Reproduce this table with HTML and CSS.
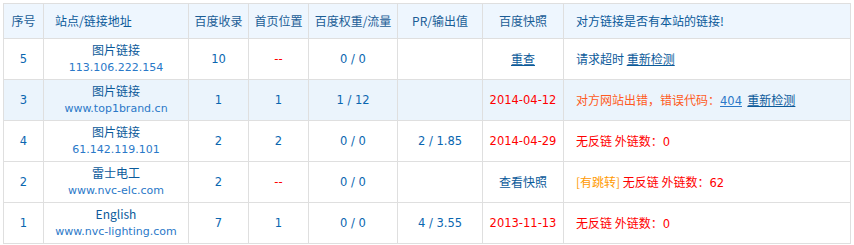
FILE: index.html
```html
<!DOCTYPE html>
<html lang="zh-CN">
<head>
<meta charset="utf-8">
<title>友情链接检测</title>
<link rel="stylesheet" href="styles.css">
</head>
<body>
<div class="wrap">
<table class="links">
  <colgroup>
    <col class="c1"><col class="c2"><col class="c3"><col class="c4"><col class="c5"><col class="c6"><col class="c7"><col class="c8">
  </colgroup>
  <thead>
    <tr>
      <th>序号</th>
      <th class="left">站点/链接地址</th>
      <th>百度收录</th>
      <th>首页位置</th>
      <th>百度权重/流量</th>
      <th>PR/输出值</th>
      <th>百度快照</th>
      <th class="left">对方链接是否有本站的链接!</th>
    </tr>
  </thead>
  <tbody>
    <tr>
      <td>5</td>
      <td><span class="name">图片链接</span><br><span class="url">113.106.222.154</span></td>
      <td>10</td>
      <td class="dash">--</td>
      <td>0 / 0</td>
      <td></td>
      <td><a class="lnk" href="#">重查</a></td>
      <td class="left">请求超时 <a class="lnk" href="#">重新检测</a></td>
    </tr>
    <tr class="hl">
      <td>3</td>
      <td><span class="name">图片链接</span><br><span class="url">www.top1brand.cn</span></td>
      <td>1</td>
      <td>1</td>
      <td>1 / 12</td>
      <td></td>
      <td class="date">2014-04-12</td>
      <td class="left"><span class="err">对方网站出错，错误代码：</span><a class="code" href="#">404</a> &nbsp;<a class="lnk" href="#">重新检测</a></td>
    </tr>
    <tr>
      <td>4</td>
      <td><span class="name">图片链接</span><br><span class="url">61.142.119.101</span></td>
      <td>2</td>
      <td>2</td>
      <td>0 / 0</td>
      <td>2 / 1.85</td>
      <td class="date">2014-04-29</td>
      <td class="left"><span class="red">无反链 外链数：</span><span class="rnum">0</span></td>
    </tr>
    <tr>
      <td>2</td>
      <td><span class="name">雷士电工</span><br><span class="url">www.nvc-elc.com</span></td>
      <td>2</td>
      <td class="dash">--</td>
      <td>0 / 0</td>
      <td></td>
      <td class="dark">查看快照</td>
      <td class="left"><span class="jump">[有跳转]</span> <span class="red">无反链 外链数：</span><span class="rnum">62</span></td>
    </tr>
    <tr>
      <td>1</td>
      <td><span class="name">English</span><br><span class="url">www.nvc-lighting.com</span></td>
      <td>7</td>
      <td>1</td>
      <td>0 / 0</td>
      <td>4 / 3.55</td>
      <td class="date">2013-11-13</td>
      <td class="left"><span class="red">无反链 外链数：</span><span class="rnum">0</span></td>
    </tr>
  </tbody>
</table>
</div>
</body>
</html>
```

FILE: styles.css
```css
html, body {
  margin: 0;
  padding: 0;
  background: #ffffff;
}
.wrap {
  padding: 3px 0 0 3px;
}
.links {
  border-collapse: collapse;
  table-layout: fixed;
  width: 847px;
  font-family: "DejaVu Sans", "Noto Sans CJK SC", sans-serif;
  font-size: 11.5px;
  line-height: 16px;
  color: #0a66b0;
}
.c1 { width: 40px; }
.c2 { width: 145px; }
.c3 { width: 60px; }
.c4 { width: 60px; }
.c5 { width: 89px; }
.c6 { width: 85px; }
.c7 { width: 81px; }
.c8 { width: 287px; }
.links th,
.links td {
  border: 1px solid #dfdfdf;
  text-align: center;
  padding: 0;
  vertical-align: middle;
}
.links th {
  height: 34px;
  background: #eef6fe;
  font-weight: normal;
  color: #1a5d96;
  font-family: "Noto Sans CJK SC", sans-serif;
  font-size: 12px;
}
.links td {
  height: 40px;
}
.links th.left,
.links td.left {
  text-align: left;
  padding-left: 12px;
  font-family: "Noto Sans CJK SC", sans-serif;
  font-size: 12px;
  color: #0b5a9a;
}
.links th.left:nth-child(2) {
  padding-left: 11px;
}
.hl td {
  background: #ebf4fc;
}
.name {
  font-family: "Noto Sans CJK SC", sans-serif;
  font-size: 12px;
  color: #0b5a9a;
}
.url {
  font-size: 11px;
  color: #2a78c8;
}
.links td.dash {
  color: #ff0000;
}
.links td.date {
  color: #ff0000;
}
.red {
  color: #ff0000;
}
.rnum {
  color: #ff0000;
  font-family: "DejaVu Sans", sans-serif;
  font-size: 11.5px;
}
.links td.dark {
  color: #0b5a9a;
  font-family: "Noto Sans CJK SC", sans-serif;
  font-size: 12px;
}
.lnk {
  color: #0b5a9a;
  text-decoration: underline;
  font-family: "Noto Sans CJK SC", sans-serif;
  font-size: 12px;
}
.err {
  color: #ff5a22;
}
.code {
  color: #2a78c8;
  text-decoration: underline;
  font-family: "DejaVu Sans", sans-serif;
  font-size: 11.5px;
}
.jump {
  color: #ff9900;
}
```
